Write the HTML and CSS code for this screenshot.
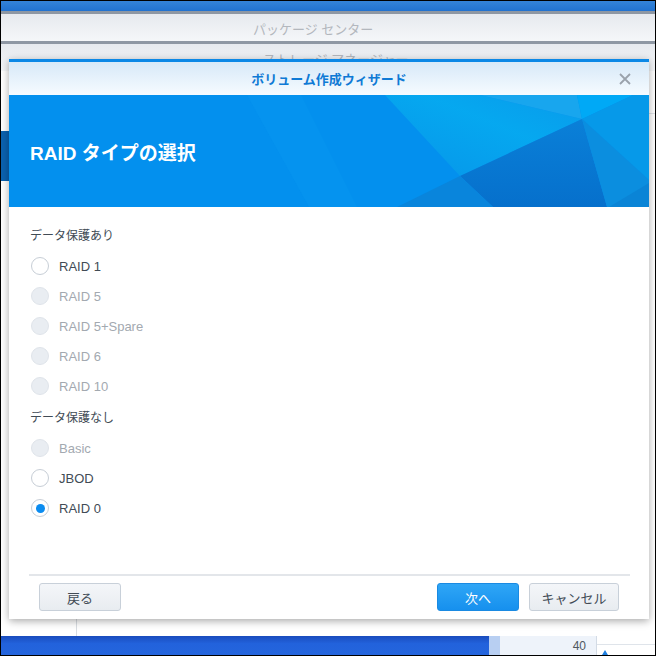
FILE: index.html
```html
<!DOCTYPE html>
<html lang="ja">
<head>
  <meta charset="UTF-8">
  <meta name="viewport" content="width=device-width, initial-scale=1.0">
  <title>ボリューム作成ウィザード</title>
  <link rel="stylesheet" href="styles.css">
</head>
<body>
  <div class="screen">
    <div class="topbar"></div>

    <!-- Background windows -->
    <div class="win-title win-pkg"><span>パッケージ センター</span></div>
    <div class="win-title win-storage"><span>ストレージ マネージャー</span></div>

    <div class="desk">
      <div class="desk-side">
        <div class="side-sel"></div>
      </div>
      <div class="desk-main">
        <div class="desk-rule"></div>
      </div>
    </div>

    <div class="taskbar">
      <div class="task-blue"></div>
      <div class="task-strip"></div>
      <div class="task-num">40</div>
      <div class="task-chart"><span class="tri"></span></div>
    </div>

    <!-- Wizard dialog -->
    <div class="dialog">
      <div class="dlg-head">
        <span class="dlg-title">ボリューム作成ウィザード</span>
        <svg class="dlg-close" width="12" height="12" viewBox="0 0 12 12">
          <path d="M1 1 L11 11 M11 1 L1 11" stroke="#9aa2ab" stroke-width="1.8" fill="none"/>
        </svg>
      </div>

      <div class="banner">
        <svg class="banner-bg" width="640" height="112" viewBox="0 0 640 112" preserveAspectRatio="none">
          <defs>
            <linearGradient id="glow" x1="0" y1="1" x2="1" y2="0">
              <stop offset="0" stop-color="#0796e8"/>
              <stop offset="0.6" stop-color="#06acf0"/>
              <stop offset="1" stop-color="#0a9cea"/>
            </linearGradient>
            <linearGradient id="dark" x1="0" y1="0" x2="0" y2="1">
              <stop offset="0" stop-color="#0a80d8"/>
              <stop offset="1" stop-color="#0670cc"/>
            </linearGradient>
          </defs>
          <rect width="640" height="112" fill="#0390ee"/>
          <polygon points="238,0 292,0 348,112 300,112" fill="#0896f0" opacity="0.5"/>
          <polygon points="376,0 471,0 573,24 451,81" fill="url(#glow)" opacity="0.85"/>
          <polygon points="471,0 568,0 573,24" fill="#18a6ee"/>
          <polygon points="568,0 624,0 573,24" fill="#00a9f6"/>
          <polygon points="624,0 640,0 640,85 573,24" fill="#0699e9"/>
          <polygon points="451,81 573,24 598,112 484,112" fill="url(#dark)"/>
          <polygon points="573,24 640,85 640,112 598,112" fill="#0b8edf"/>
          <polygon points="600,112 640,88 640,112" fill="#0a84d6"/>
          <polygon points="451,81 484,112 388,112" fill="#0985dc"/>
        </svg>
        <h1 class="banner-title">RAID タイプの選択</h1>
      </div>

      <div class="dlg-body">
        <div class="group">
          <h4>データ保護あり</h4>
          <div class="radio-row"><span class="radio"></span><span class="lbl">RAID 1</span></div>
          <div class="radio-row disabled"><span class="radio"></span><span class="lbl">RAID 5</span></div>
          <div class="radio-row disabled"><span class="radio"></span><span class="lbl">RAID 5+Spare</span></div>
          <div class="radio-row disabled"><span class="radio"></span><span class="lbl">RAID 6</span></div>
          <div class="radio-row disabled"><span class="radio"></span><span class="lbl">RAID 10</span></div>
        </div>
        <div class="group group-next">
          <h4>データ保護なし</h4>
          <div class="radio-row disabled"><span class="radio"></span><span class="lbl">Basic</span></div>
          <div class="radio-row"><span class="radio"></span><span class="lbl">JBOD</span></div>
          <div class="radio-row checked"><span class="radio"></span><span class="lbl">RAID 0</span></div>
        </div>
      </div>

      <div class="dlg-foot">
        <div class="foot-rule"></div>
        <div class="foot-btns">
          <button class="btn btn-back">戻る</button>
          <span class="spacer"></span>
          <button class="btn btn-primary">次へ</button>
          <button class="btn btn-cancel">キャンセル</button>
        </div>
      </div>
    </div>
  </div>
</body>
</html>
```

FILE: styles.css
```css
/* Base */
body {
  margin: 0;
  font-family: "Liberation Sans", "Noto Sans CJK JP", sans-serif;
  color: #414b55;
}

.screen {
  position: relative;
  width: 656px;
  height: 656px;
  box-sizing: border-box;
  border: 1px solid #000;
  display: flex;
  flex-direction: column;
  overflow: hidden;
  background: #fff;
}

/* Desktop behind the dialog */
.topbar {
  height: 10px;
  background: linear-gradient(#3483d8, #2172d0);
}

.win-title {
  height: 27px;
  border-top: 3px solid #8e97a3;
  background: linear-gradient(#e6e9ee, #f5f7f9);
  font-size: 13px;
  line-height: 31px;
  color: #b3b7bd;
}

.win-pkg {
  padding-left: 252px;
}

.win-storage {
  padding-left: 262px;
}

.desk {
  flex: 1;
  display: flex;
}

.desk-side {
  width: 75px;
  border-right: 1px solid #d9dde2;
  padding-top: 60px;
}

.side-sel {
  width: 8px;
  height: 50px;
  background: #0b62b0;
}

.desk-main {
  flex: 1;
  padding-top: 42px;
}

.desk-rule {
  border-top: 1px solid #dfe3e8;
}

.taskbar {
  height: 19px;
  display: flex;
}

.task-blue {
  width: 488px;
  background: linear-gradient(#1a4cbd, #2262dc 40%, #2465dd);
}

.task-strip {
  width: 11px;
  background: #b8cff2;
}

.task-num {
  width: 86px;
  padding-right: 10px;
  background: #eef3fa;
  text-align: right;
  font-size: 12px;
  line-height: 20px;
  color: #505860;
  border-right: 1px solid #d3dbe5;
}

.task-chart {
  flex: 1;
  position: relative;
  background: #fff;
  border-top: 8px solid #fff;
  box-shadow: inset 0 1px 0 #dfe4ea;
}

.tri {
  position: absolute;
  left: 5px;
  bottom: 0;
  width: 0;
  height: 0;
  border-left: 3px solid transparent;
  border-right: 3px solid transparent;
  border-bottom: 5px solid #1f7fe0;
}

/* Dialog */
.dialog {
  position: absolute;
  left: 8px;
  top: 58px;
  width: 640px;
  height: 560px;
  box-sizing: border-box;
  border-top: 3px solid #0b88e6;
  background: #fff;
  box-shadow: 0 2px 8px rgba(0, 0, 0, 0.35);
  display: flex;
  flex-direction: column;
}

.dlg-head {
  height: 33px;
  display: flex;
  align-items: center;
  justify-content: center;
  position: relative;
  background: linear-gradient(#d7e9f8, #f6fbff);
}

.dlg-title {
  font-size: 13px;
  font-weight: bold;
  color: #0f7ad5;
}

.dlg-close {
  position: absolute;
  right: 18px;
  top: 11px;
}

.banner {
  height: 112px;
  position: relative;
  display: flex;
  align-items: center;
}

.banner-bg {
  position: absolute;
  left: 0;
  top: 0;
}

.banner-title {
  position: relative;
  margin: 0 0 0 21px;
  font-size: 19px;
  font-weight: bold;
  color: #fff;
}

.dlg-body {
  flex: 1;
  padding: 20px 21px 0;
}

.group h4 {
  margin: 0 0 6px;
  font-size: 12px;
  font-weight: normal;
  line-height: 18px;
  color: #414b55;
}

.group-next {
  margin-top: 8px;
}

.radio-row {
  height: 30px;
  display: flex;
  align-items: center;
  gap: 10px;
  font-size: 13px;
}

.radio {
  width: 16px;
  height: 16px;
  margin-left: 1px;
  border: 1px solid #c7ced6;
  border-radius: 50%;
  background: #fff;
  display: flex;
  align-items: center;
  justify-content: center;
}

.radio-row.disabled .radio {
  background: #e9edf2;
  border-color: #dfe4ea;
}

.radio-row.disabled .lbl {
  color: #a3a9b0;
}

.radio-row.checked .radio::after {
  content: "";
  width: 9px;
  height: 9px;
  border-radius: 50%;
  background: #0b8cf0;
}

/* Footer */
.dlg-foot {
  padding: 0 30px 8px;
}

.foot-rule {
  margin: 0 -11px 0 -10px;
  border-top: 2px solid #e3e6ea;
}

.foot-btns {
  display: flex;
  gap: 10px;
  margin-top: 7px;
}

.spacer {
  flex: 1;
}

.btn {
  height: 28px;
  width: 82px;
  border: 1px solid #c8d0d9;
  border-radius: 3px;
  background: linear-gradient(#f4f6f9, #e8ecf0);
  font-family: inherit;
  font-size: 13px;
  color: #414b55;
  padding: 0;
}

.btn-primary {
  background: linear-gradient(#2fa6f6, #1690ee);
  border-color: #1a8ae2;
  color: #fff;
}

.btn-cancel {
  width: 90px;
}
```
